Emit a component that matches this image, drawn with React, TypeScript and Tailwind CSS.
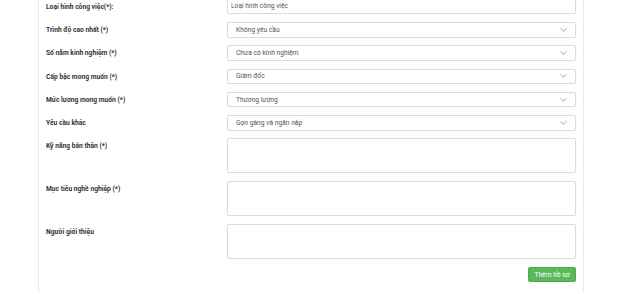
import React from 'react';

type Field = {
  label: string;
  kind: 'input' | 'select' | 'textarea';
  value?: string;
};

const fields: Field[] = [
  { label: 'Loại hình công việc(*):', kind: 'input', value: 'Loại hình công việc' },
  { label: 'Trình độ cao nhất (*)', kind: 'select', value: 'Không yêu cầu' },
  { label: 'Số năm kinh nghiệm (*)', kind: 'select', value: 'Chưa có kinh nghiệm' },
  { label: 'Cấp bậc mong muốn (*)', kind: 'select', value: 'Giám đốc' },
  { label: 'Mức lương mong muốn (*)', kind: 'select', value: 'Thương lượng' },
  { label: 'Yêu cầu khác', kind: 'select', value: 'Gọn gàng và ngăn nắp' },
  { label: 'Kỹ năng bản thân (*)', kind: 'textarea' },
  { label: 'Mục tiêu nghề nghiệp (*)', kind: 'textarea' },
  { label: 'Người giới thiệu', kind: 'textarea' },
];

function Chevron() {
  return (
    <svg width="7" height="4" viewBox="0 0 7 4" className="text-[#999]">
      <path d="M0.5 0.5 L3.5 3.2 L6.5 0.5" fill="none" stroke="currentColor" strokeWidth="0.9" />
    </svg>
  );
}

function Control({ field }: { field: Field }) {
  const box = 'w-full border border-[#dcdcdc] rounded-[2px] bg-white shadow-[0_0_1px_rgba(0,0,0,0.08)]';
  if (field.kind === 'input') {
    return (
      <div className={`${box} h-[15.5px] flex items-center pl-[3px] text-[6.7px] text-[#555]`}>
        {field.value}
      </div>
    );
  }
  if (field.kind === 'select') {
    return (
      <div className={`${box} h-[15.5px] flex items-center justify-between pl-[8px] pr-[8px] text-[6.7px] text-[#555]`}>
        <span>{field.value}</span>
        <Chevron />
      </div>
    );
  }
  return <div className={`${box} h-[35px]`} />;
}

export default function App() {
  return (
    <div className="w-[628px] h-[294px] bg-white overflow-hidden" style={{ fontFamily: 'Roboto, "Noto Sans", sans-serif' }}>
      <div className="ml-[38px] w-[546px] h-full border-x border-[#e8e8e8] px-[7px]">
        <div className="-mt-[1.3px] flex flex-col gap-[7.8px]">
          {fields.map((f) => (
            <div key={f.label} className="flex items-start">
              <div className="w-[181px] shrink-0 h-[15.5px] pt-[0.5px] flex items-center text-[6.7px] font-bold text-[#333]">
                {f.label}
              </div>
              <div className="flex-1">
                <Control field={f} />
              </div>
            </div>
          ))}
          <div className="flex justify-end">
            <button className="h-[15.5px] w-[48px] rounded-[2px] bg-[#5cb85c] border border-[#4cae4c] text-white text-[6.7px] flex items-center justify-center">
              Thêm hồ sơ
            </button>
          </div>
        </div>
      </div>
    </div>
  );
}
